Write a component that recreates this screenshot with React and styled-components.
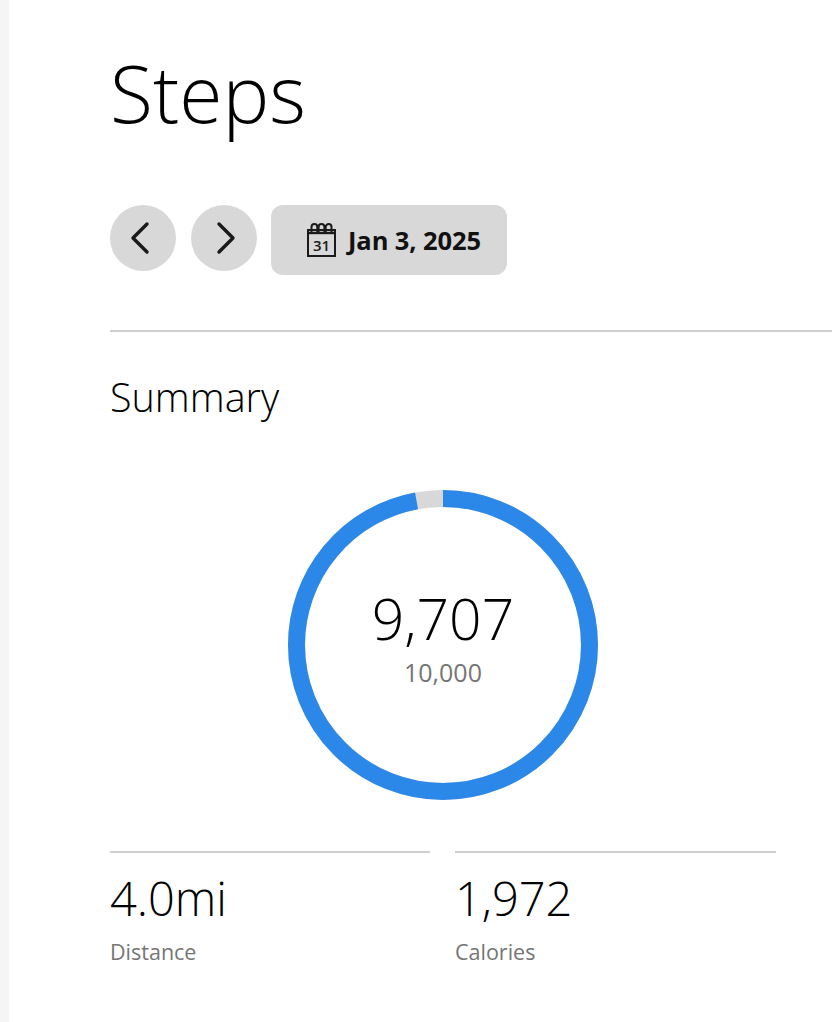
import React from 'react';
import styled, { createGlobalStyle } from 'styled-components';

const GlobalStyle = createGlobalStyle`
  html, body {
    margin: 0;
    padding: 0;
    background: #fff;
    overflow: hidden;
  }
  body {
    font-family: "Open Sans", "Liberation Sans", sans-serif;
    color: #1a1a1a;
  }
`;

const Page = styled.div`
  width: 832px;
  height: 1022px;
  overflow: hidden;
  display: flex;
`;

const Rail = styled.div`
  width: 9px;
  flex-shrink: 0;
  background: #f5f5f5;
`;

const Main = styled.main`
  flex: 1;
  min-width: 0;
  padding-left: 101px;
`;

const Title = styled.h1`
  margin: 0;
  padding-top: 47px;
  font-size: 78.7px;
  line-height: 91px;
  font-weight: 300;
  color: #000;
`;

const Toolbar = styled.div`
  display: flex;
  align-items: flex-start;
  margin-top: 67px;
`;

const RoundButton = styled.button`
  width: 66px;
  height: 66px;
  border: 0;
  padding: ${({ $left }) => ($left ? '0 6px 0 0' : '0 0 0 4px')};
  margin-right: ${({ $left }) => ($left ? 15 : 14)}px;
  border-radius: 50%;
  background: #d8d8d8;
  display: flex;
  align-items: center;
  justify-content: center;
`;

const DateButton = styled.button`
  width: 236px;
  height: 70px;
  border: 0;
  padding: 0 0 0 36px;
  border-radius: 12px;
  background: #d8d8d8;
  display: flex;
  align-items: center;
  gap: 12px;
  font-family: inherit;
  font-size: 25.5px;
  font-weight: 700;
  letter-spacing: -0.1px;
  color: #111;
`;

const Divider = styled.div`
  height: 2px;
  background: #cfcfcf;
  margin-top: 55px;
`;

const SectionTitle = styled.h2`
  margin: 0;
  padding-top: 42px;
  font-size: 39.5px;
  line-height: 46px;
  font-weight: 300;
  color: #000;
`;

const RingWrap = styled.div`
  position: relative;
  width: 310px;
  height: 310px;
  margin: 70px 0 0 178px;
`;

const RingText = styled.div`
  position: absolute;
  inset: 0;
  display: flex;
  flex-direction: column;
  align-items: center;
  padding-top: 93px;
`;

const RingValue = styled.div`
  font-size: 57px;
  line-height: 70px;
  font-weight: 300;
  color: #000;
`;

const RingGoal = styled.div`
  font-size: 25px;
  line-height: 30px;
  font-weight: 400;
  color: #757575;
  margin-top: 4px;
`;

const Stats = styled.div`
  display: flex;
  gap: 25px;
  margin-top: 51px;
`;

const Stat = styled.div`
  width: ${({ $width }) => $width}px;
  border-top: 2px solid #cfcfcf;
  padding-top: 15px;
`;

const StatValue = styled.div`
  font-size: 47px;
  line-height: 60px;
  font-weight: 300;
  color: #000;
`;

const StatLabel = styled.div`
  font-size: 21.5px;
  line-height: 28px;
  color: #757575;
  margin-top: 10px;
`;

const Chevron = ({ left }) => (
  <svg width="22" height="34" viewBox="0 0 22 34" fill="none" stroke="#1a1a1a" strokeWidth="3.4" strokeLinecap="round" strokeLinejoin="round">
    <path d={left ? 'M18 3 L4 17 L18 31' : 'M4 3 L18 17 L4 31'} />
  </svg>
);

const CalendarIcon = () => (
  <svg width="29" height="34" viewBox="0 0 29 34" fill="none" stroke="#1a1a1a">
    <path d="M1 7 H28 V33 H1 Z" strokeWidth="2" />
    <path d="M1 10 H28" strokeWidth="2.4" />
    <path d="M4.5 9 V4 a2.9 2.9 0 0 1 5.8 0 V9 M11.6 9 V4 a2.9 2.9 0 0 1 5.8 0 V9 M18.7 9 V4 a2.9 2.9 0 0 1 5.8 0 V9" strokeWidth="2" />
    <text x="14.5" y="27.5" textAnchor="middle" fontFamily="Open Sans" fontSize="15" fontWeight="600" fill="#1a1a1a" stroke="none">31</text>
  </svg>
);

const Ring = ({ value, goal }) => {
  const r = 146.5;
  const c = 2 * Math.PI * r;
  const done = (value / goal) * c;
  return (
    <svg width="310" height="310" viewBox="0 0 310 310" fill="none" strokeWidth="17">
      <circle cx="155" cy="155" r={r} stroke="#d8d8d8" />
      <circle
        cx="155"
        cy="155"
        r={r}
        stroke="#2b88e8"
        strokeDasharray={`${done} ${c}`}
        transform="rotate(-90 155 155)"
      />
    </svg>
  );
};

export default function App() {
  return (
    <Page>
      <GlobalStyle />
      <Rail />
      <Main>
        <Title>Steps</Title>
        <Toolbar>
          <RoundButton $left><Chevron left /></RoundButton>
          <RoundButton><Chevron /></RoundButton>
          <DateButton>
            <CalendarIcon />
            Jan 3, 2025
          </DateButton>
        </Toolbar>
        <Divider />
        <SectionTitle>Summary</SectionTitle>
        <RingWrap>
          <Ring value={9707} goal={10000} />
          <RingText>
            <RingValue>9,707</RingValue>
            <RingGoal>10,000</RingGoal>
          </RingText>
        </RingWrap>
        <Stats>
          <Stat $width={320}>
            <StatValue>4.0mi</StatValue>
            <StatLabel>Distance</StatLabel>
          </Stat>
          <Stat $width={321}>
            <StatValue>1,972</StatValue>
            <StatLabel>Calories</StatLabel>
          </Stat>
        </Stats>
      </Main>
    </Page>
  );
}
